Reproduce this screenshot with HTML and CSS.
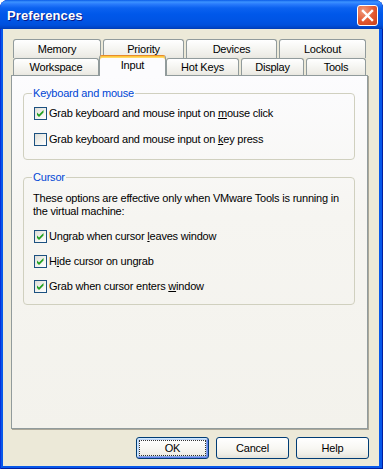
FILE: index.html
```html
<!DOCTYPE html>
<html>
<head>
<meta charset="utf-8">
<link rel="stylesheet" href="styles.css">
</head>
<body>
<div class="window">
  <div class="titlebar">
    <span class="title">Preferences</span>
    <div class="close"><svg width="21" height="21" viewBox="0 0 21 21"><path d="M6 6 L15 15 M15 6 L6 15" stroke="#fff" stroke-width="2.4" stroke-linecap="square"/></svg></div>
  </div>
  <div class="client">
    <div class="tabs">
      <div class="tabrow back">
        <div class="tab t-memory">Memory</div>
        <div class="tab t-priority">Priority</div>
        <div class="tab t-devices">Devices</div>
        <div class="tab t-lockout">Lockout</div>
      </div>
      <div class="tabrow front">
        <div class="tab t-workspace">Workspace</div>
        <div class="tab t-input selected">Input</div>
        <div class="tab t-hotkeys">Hot Keys</div>
        <div class="tab t-display">Display</div>
        <div class="tab t-tools">Tools</div>
      </div>
    </div>
    <div class="panel">
      <fieldset class="group g1">
        <legend>Keyboard and mouse</legend>
        <div class="check first"><span class="box"><svg width="11" height="11" viewBox="0 0 11 11"><path d="M2 4.5 L4 6.5 L8.5 2 L8.5 4.5 L4 9 L2 7 Z" fill="#21A121"/></svg></span><span class="lbl">Grab keyboard and mouse input on <u>m</u>ouse click</span></div>
        <div class="check"><span class="box"></span><span class="lbl">Grab keyboard and mouse input on <u>k</u>ey press</span></div>
      </fieldset>
      <fieldset class="group g2">
        <legend>Cursor</legend>
        <p class="note">These options are effective only when VMware Tools is running in<br>the virtual machine:</p>
        <div class="check first"><span class="box"><svg width="11" height="11" viewBox="0 0 11 11"><path d="M2 4.5 L4 6.5 L8.5 2 L8.5 4.5 L4 9 L2 7 Z" fill="#21A121"/></svg></span><span class="lbl">Ungrab when cursor <u>l</u>eaves window</span></div>
        <div class="check"><span class="box"><svg width="11" height="11" viewBox="0 0 11 11"><path d="M2 4.5 L4 6.5 L8.5 2 L8.5 4.5 L4 9 L2 7 Z" fill="#21A121"/></svg></span><span class="lbl">H<u>i</u>de cursor on ungrab</span></div>
        <div class="check"><span class="box"><svg width="11" height="11" viewBox="0 0 11 11"><path d="M2 4.5 L4 6.5 L8.5 2 L8.5 4.5 L4 9 L2 7 Z" fill="#21A121"/></svg></span><span class="lbl">Grab when cursor enters <u>w</u>indow</span></div>
      </fieldset>
    </div>
    <div class="buttons">
      <button class="btn default">OK</button>
      <button class="btn">Cancel</button>
      <button class="btn">Help</button>
    </div>
  </div>
</div>
</body>
</html>
```
FILE: styles.css
```css
html, body { margin: 0; padding: 0; background: #fff; }
body { font-family: "Liberation Sans", Arial, sans-serif; font-size: 11px; color: #000; letter-spacing: -0.2px; }

.window {
  width: 383px; height: 469px; box-sizing: border-box;
  display: flex; flex-direction: column;
  background: #0758EA;
  border-radius: 8px 8px 0 0;
  box-shadow: inset 1px 0 0 #0831D9, inset -1px 0 0 #001EA0, inset 0 -1px 0 #001EA0;
  overflow: hidden;
}
.titlebar {
  height: 29px; flex: none;
  display: flex; align-items: center;
  padding: 0 5px 0 7px;
  background: linear-gradient(to bottom, #0A5CE8 0px, #3C93FF 2px, #2A7CFC 4px, #0B62F0 8px, #0058EA 14px, #0054E4 21px, #0050DC 25px, #0043C4 28px, #003BB0 29px);
  border-radius: 7px 7px 0 0;
}
.title {
  font-family: "Liberation Sans", Arial, sans-serif; font-weight: bold; font-size: 13px;
  color: #fff; text-shadow: 1px 1px 0 #0A1883; letter-spacing: 0.1px;
  margin-top: 1px;
}
.close {
  margin-left: auto; width: 21px; height: 21px; box-sizing: border-box;
  border: 1px solid #fff; border-radius: 3px;
  background: radial-gradient(circle at 30% 25%, #F09A7C 0, #E2572F 55%, #C8401A 100%);
  display: flex; align-items: center; justify-content: center;
  margin-top: 2px;
}
.close svg { display: block; margin: -1px; }

.client {
  flex: 1; margin: 0 4px 3px 3px;
  background: #ECE9D8;
  padding: 10px 11px 0 8px;
  display: flex; flex-direction: column;
}

.tabs { display: flex; flex-direction: column; }
.tabrow { display: flex; gap: 2px; padding-left: 2px; align-items: flex-start; }
.tabrow.back { height: 19px; }
.tabrow.front { height: 17px; }
.tab {
  box-sizing: border-box; flex: none;
  border: 1px solid #919B9C; border-bottom: none;
  border-radius: 3px 3px 0 0;
  background: linear-gradient(to bottom, #FFFFFF 0, #F7F7F4 40%, #EEEDE7 85%, #E8E7E0 100%);
  display: flex; align-items: center; justify-content: center;
  font-size: 11px; color: #000;
}
.back .tab { height: 19px; }
.front .tab { height: 17px; }
.t-memory { width: 88px; }
.t-priority { width: 81px; }
.t-devices { width: 91px; }
.t-lockout { width: 87px; }
.t-workspace { width: 86px; }
.t-input { width: 63px; }
.t-hotkeys { width: 73px; }
.t-display { width: 63px; }
.t-tools { width: 60px; }
.front .tab.selected {
  position: relative; z-index: 2;
  height: 21px; width: 67px;
  margin: -3px -2px 0 -2px;
  background: #FCFCFE;
  border-top: 1px solid #E68B2C;
  box-shadow: inset 0 1px 0 #FFC83C, inset 0 2px 0 #FFD86A;
  padding-bottom: 3px;
}

.panel {
  box-sizing: border-box; height: 354px;
  border: 1px solid #919B9C;
  background: linear-gradient(to bottom, #FCFCFE 0, #F6F5F1 40%, #F3F2EC 100%);
  box-shadow: 1px 1px 0 #ACA899;
  padding: 10px 12px 0 11px;
}

.group {
  margin: 0; box-sizing: border-box;
  border: 1px solid #D0D0BF; border-radius: 4px;
  padding: 0 9px 13px 9px;
  min-width: 0;
}
.group legend {
  margin-left: -1px; padding: 0 1px;
  line-height: 14px; height: 14px;
  color: #0046D5;
}
.g2 { margin-top: 10px; padding-bottom: 11px; }

.check { display: flex; align-items: center; height: 13px; margin-top: 13px; }
.check.first { margin-top: 7px; }
.g2 .check { margin-top: 12px; }
.g2 .check.first { margin-top: 12px; }
.box {
  flex: none; box-sizing: border-box; width: 13px; height: 13px;
  margin-left: 1px; margin-right: 2px;
  border: 1px solid #1C5180;
  background: linear-gradient(135deg, #DCDCD7 0, #EDEDE8 40%, #FFFFFF 100%);
}
.box svg { display: block; }
.lbl { line-height: 13px; white-space: nowrap; }
.lbl u { text-decoration: underline; text-underline-offset: 1px; }

.note { margin: 8px 0 0 0; line-height: 13px; white-space: nowrap; }

.buttons {
  display: flex; justify-content: flex-end; gap: 7px;
  margin-top: 8px; padding-right: 0; margin-right: -1px;
}
.btn {
  box-sizing: border-box; width: 73px; height: 22px;
  border: 1px solid #003C74; border-radius: 3px;
  background: linear-gradient(to bottom, #FFFFFF 0, #F8F7F3 50%, #EFEEE7 80%, #E3E1D8 100%);
  font-family: "Liberation Sans", Arial, sans-serif; font-size: 11px; color: #000;
  letter-spacing: -0.2px;
  padding: 0; margin: 0;
}
.btn.default {
  box-shadow: inset 1px 1px 0 #CEE7FF, inset -1px -1px 0 #6982EE, inset 2px 2px 0 #BCD4F6, inset -2px -2px 0 #89ADE4;
  outline: 1px dotted #333; outline-offset: -4px;
}
```
